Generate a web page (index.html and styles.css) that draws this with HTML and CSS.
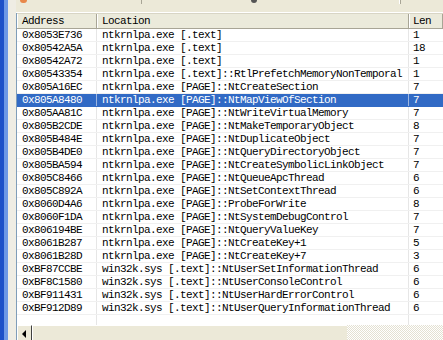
FILE: index.html
```html
<!DOCTYPE html>
<html>
<head>
<meta charset="utf-8">
<link rel="stylesheet" href="styles.css">
</head>
<body>
<div class="frame">
  <div class="edge"></div>
  <div class="main">
    <div class="toolbar">
      <span class="tb-icon"></span>
      <span class="tb-sep sep1"></span>
      <span class="tb-glyph"></span>
      <span class="tb-sep sep2"></span>
    </div>
    <div class="list">
      <div class="header">
        <div class="hcell c1">Address</div>
        <div class="hcell c2">Location</div>
        <div class="hcell c3">Len</div>
      </div>
      <div class="rows">
        <div class="row"><div class="cell c1">0x8053E736</div><div class="cell c2">ntkrnlpa.exe [.text]</div><div class="cell c3">1</div></div>
        <div class="row"><div class="cell c1">0x80542A5A</div><div class="cell c2">ntkrnlpa.exe [.text]</div><div class="cell c3">18</div></div>
        <div class="row"><div class="cell c1">0x80542A72</div><div class="cell c2">ntkrnlpa.exe [.text]</div><div class="cell c3">1</div></div>
        <div class="row"><div class="cell c1">0x80543354</div><div class="cell c2">ntkrnlpa.exe [.text]::RtlPrefetchMemoryNonTemporal</div><div class="cell c3">1</div></div>
        <div class="row"><div class="cell c1">0x805A16EC</div><div class="cell c2">ntkrnlpa.exe [PAGE]::NtCreateSection</div><div class="cell c3">7</div></div>
        <div class="row selected"><div class="cell c1">0x805A8480</div><div class="cell c2">ntkrnlpa.exe [PAGE]::NtMapViewOfSection</div><div class="cell c3">7</div></div>
        <div class="row"><div class="cell c1">0x805AA81C</div><div class="cell c2">ntkrnlpa.exe [PAGE]::NtWriteVirtualMemory</div><div class="cell c3">7</div></div>
        <div class="row"><div class="cell c1">0x805B2CDE</div><div class="cell c2">ntkrnlpa.exe [PAGE]::NtMakeTemporaryObject</div><div class="cell c3">8</div></div>
        <div class="row"><div class="cell c1">0x805B484E</div><div class="cell c2">ntkrnlpa.exe [PAGE]::NtDuplicateObject</div><div class="cell c3">7</div></div>
        <div class="row"><div class="cell c1">0x805B4DE0</div><div class="cell c2">ntkrnlpa.exe [PAGE]::NtQueryDirectoryObject</div><div class="cell c3">7</div></div>
        <div class="row"><div class="cell c1">0x805BA594</div><div class="cell c2">ntkrnlpa.exe [PAGE]::NtCreateSymbolicLinkObject</div><div class="cell c3">7</div></div>
        <div class="row"><div class="cell c1">0x805C8466</div><div class="cell c2">ntkrnlpa.exe [PAGE]::NtQueueApcThread</div><div class="cell c3">6</div></div>
        <div class="row"><div class="cell c1">0x805C892A</div><div class="cell c2">ntkrnlpa.exe [PAGE]::NtSetContextThread</div><div class="cell c3">6</div></div>
        <div class="row"><div class="cell c1">0x8060D4A6</div><div class="cell c2">ntkrnlpa.exe [PAGE]::ProbeForWrite</div><div class="cell c3">8</div></div>
        <div class="row"><div class="cell c1">0x8060F1DA</div><div class="cell c2">ntkrnlpa.exe [PAGE]::NtSystemDebugControl</div><div class="cell c3">7</div></div>
        <div class="row"><div class="cell c1">0x806194BE</div><div class="cell c2">ntkrnlpa.exe [PAGE]::NtQueryValueKey</div><div class="cell c3">7</div></div>
        <div class="row"><div class="cell c1">0x8061B287</div><div class="cell c2">ntkrnlpa.exe [PAGE]::NtCreateKey+1</div><div class="cell c3">5</div></div>
        <div class="row"><div class="cell c1">0x8061B28D</div><div class="cell c2">ntkrnlpa.exe [PAGE]::NtCreateKey+7</div><div class="cell c3">3</div></div>
        <div class="row"><div class="cell c1">0xBF87CCBE</div><div class="cell c2">win32k.sys [.text]::NtUserSetInformationThread</div><div class="cell c3">6</div></div>
        <div class="row"><div class="cell c1">0xBF8C1580</div><div class="cell c2">win32k.sys [.text]::NtUserConsoleControl</div><div class="cell c3">6</div></div>
        <div class="row"><div class="cell c1">0xBF911431</div><div class="cell c2">win32k.sys [.text]::NtUserHardErrorControl</div><div class="cell c3">6</div></div>
        <div class="row"><div class="cell c1">0xBF912D89</div><div class="cell c2">win32k.sys [.text]::NtUserQueryInformationThread</div><div class="cell c3">6</div></div>
        <div class="row empty"><div class="cell c1"></div><div class="cell c2"></div><div class="cell c3"></div></div>
      </div>
      <div class="hscroll">
        <div class="sbtn"><span class="arrow"></span></div>
        <div class="thumb"></div>
        <div class="track"></div>
      </div>
    </div>
  </div>
</div>
</body>
</html>
```

FILE: styles.css
```css
html, body {
  margin: 0;
  padding: 0;
}
body {
  width: 443px;
  height: 340px;
  overflow: hidden;
  background: #ece9d8;
  font-family: "Liberation Mono", "DejaVu Sans Mono", monospace;
  font-size: 11px;
  letter-spacing: -0.6px;
  color: #000;
}
.frame {
  display: flex;
  height: 340px;
}
.edge {
  width: 4px;
  flex: none;
  background: #1e50c8;
  border-right: 4px solid #6e98e6;
}
.main {
  flex: 1;
  display: flex;
  flex-direction: column;
  padding-left: 8px;
  background: #efede4;
}
.toolbar {
  height: 13px;
  flex: none;
  position: relative;
  background: #ece9d8;
  border-bottom: 1px solid #fff;
  box-sizing: border-box;
}
.tb-icon {
  position: absolute;
  left: 4px;
  top: -3px;
  width: 7px;
  height: 6px;
  border-radius: 3px;
  background: #e8884a;
}
.tb-sep {
  position: absolute;
  top: 0;
  width: 1px;
  height: 4px;
  background: #a8a596;
}
.sep1 { left: 125px; }
.sep2 { left: 384px; box-shadow: -1px 0 0 #fff; }
.tb-glyph {
  position: absolute;
  left: 235px;
  top: 0;
  width: 6px;
  height: 3px;
  background: #555;
  border-radius: 0 0 3px 3px;
}
.list {
  flex: 1;
  display: flex;
  flex-direction: column;
  background: #fff;
  border-left: 1px solid #7f9db9;
}
.header {
  display: flex;
  height: 16px;
  flex: none;
  background: #ebeadb;
  border-top: 1px solid #d8d5c5;
  border-bottom: 1px solid #a8a596;
  box-sizing: border-box;
}
.hcell {
  box-sizing: border-box;
  padding-left: 5px;
  line-height: 14px;
  border-right: 1px solid #a8a596;
  box-shadow: inset 1px 0 0 #fff;
}
.c1 { width: 80px; flex: none; }
.c2 { width: 312px; flex: none; }
.c3 { flex: 1; padding-left: 4px; }
.hcell.c3 { border-right: 1px solid #a8a596; }
.rows {
  flex: 1;
  display: flex;
  flex-direction: column;
}
.row {
  display: flex;
  height: 13px;
  flex: none;
  box-sizing: border-box;
  border-bottom: 1px solid #f0f0f0;
}
.row.empty {
  flex: 1;
  border-bottom: none;
}
.cell {
  box-sizing: border-box;
  padding-left: 5px;
  line-height: 12px;
  white-space: nowrap;
  overflow: hidden;
  border-right: 1px solid #e6e6e6;
}
.cell.c3 { border-right: none; padding-left: 4px; }
.row.selected {
  background: #316ac5;
  color: #fff;
  border-bottom-color: #316ac5;
}
.row.selected .cell { border-right-color: #9db6e0; }
.hscroll {
  height: 15px;
  flex: none;
  display: flex;
  background: #fff;
}
.sbtn {
  width: 14px;
  flex: none;
  box-sizing: border-box;
  background: #ece9d8;
  border-top: 1px solid #fff;
  border-left: 1px solid #fff;
  position: relative;
}
.arrow {
  position: absolute;
  left: 4px;
  top: 4px;
  width: 0;
  height: 0;
  border-top: 4px solid transparent;
  border-bottom: 4px solid transparent;
  border-right: 4px solid #000;
}
.thumb {
  width: 316px;
  flex: none;
  box-sizing: border-box;
  background: #ece9d8;
  border-left: 1px solid #404040;
  border-top: 1px solid #fff;
  box-shadow: inset 1px 0 0 #fff;
}
.track {
  flex: 1;
  background: repeating-conic-gradient(#fff 0 25%, #e4e1d2 0 50%) 0 0 / 2px 2px;
}
```
